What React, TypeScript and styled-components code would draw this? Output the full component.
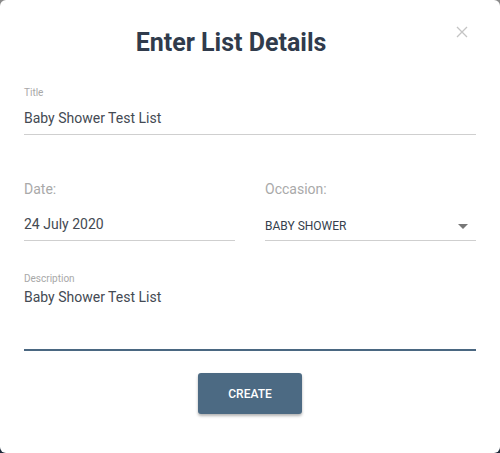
import React from "react";
import styled, { createGlobalStyle } from "styled-components";

const Global = createGlobalStyle`
  html, body { margin: 0; padding: 0; }
  body {
    width: 500px; height: 453px; overflow: hidden;
    background: linear-gradient(#8a8a8a, #1e2a3a);
    font-family: Roboto, "Liberation Sans", sans-serif;
  }
`;

const Modal = styled.div`
  position: relative;
  box-sizing: border-box;
  width: 500px;
  height: 453px;
  background: #fff;
  border-radius: 6px;
  padding: 28px 24px 0 24px;
  display: flex;
  flex-direction: column;
`;

const Heading = styled.h1`
  margin: 0;
  padding-right: 38px;
  text-align: center;
  font-size: 25px;
  font-weight: 700;
  color: #303b4c;
  line-height: 30px;
`;

const Close = styled.button`
  position: absolute;
  top: 26px;
  right: 31px;
  border: none;
  background: none;
  padding: 0;
  width: 14px;
  height: 14px;
  cursor: pointer;
`;

const Field = styled.div<{ $mt: number }>`
  margin-top: ${(p) => p.$mt}px;
  display: flex;
  flex-direction: column;
  min-width: 0;
`;

const SmallLabel = styled.label`
  font-size: 10px;
  color: #a8a8a8;
  line-height: 12px;
`;

const BigLabel = styled.label`
  font-size: 14px;
  color: #a9a9a9;
  line-height: 16px;
`;

const Value = styled.div<{ $pt: number; $pb: number; $line: string; $lw: number }>`
  font-size: 14px;
  color: #444a53;
  padding-top: ${(p) => p.$pt}px;
  padding-bottom: ${(p) => p.$pb}px;
  line-height: 17px;
  border-bottom: ${(p) => p.$lw}px solid ${(p) => p.$line};
`;

const SelectBox = styled.div`
  display: flex;
  align-items: center;
  justify-content: space-between;
  padding-top: 21px;
  padding-bottom: 5px;
  border-bottom: 1px solid #cfcfcf;
  font-size: 12px;
  color: #363f4d;
  line-height: 17px;
  padding-right: 8px;
`;

const Row = styled.div`
  margin-top: 46px;
  display: grid;
  grid-template-columns: 211px 211px;
  column-gap: 30px;
`;

const Footer = styled.div`
  display: flex;
  justify-content: center;
  margin-top: 22px;
`;

const Button = styled.button`
  width: 104px;
  height: 41px;
  border: none;
  border-radius: 3px;
  background: #4c6a83;
  color: #fff;
  font-family: Roboto, "Liberation Sans", sans-serif;
  font-size: 12px;
  font-weight: 500;
  box-shadow: 0 2px 3px rgba(0, 0, 0, 0.3);
  cursor: pointer;
`;

export default function App() {
  return (
    <>
      <Global />
      <Modal>
        <Heading>Enter List Details</Heading>
        <Close aria-label="close">
          <svg width="12" height="12" viewBox="0 0 12 12">
            <path d="M1 1L11 11M11 1L1 11" stroke="#c4c4c4" strokeWidth="1.3" />
          </svg>
        </Close>
        <Field $mt={29}>
          <SmallLabel>Title</SmallLabel>
          <Value $pt={11} $pb={7} $line="#cfcfcf" $lw={1}>Baby Shower Test List</Value>
        </Field>
        <Row>
          <Field $mt={0}>
            <BigLabel>Date:</BigLabel>
            <Value $pt={19} $pb={7} $line="#cfcfcf" $lw={1}>24 July 2020</Value>
          </Field>
          <Field $mt={0}>
            <BigLabel>Occasion:</BigLabel>
            <SelectBox>
              <span>BABY SHOWER</span>
              <svg width="10" height="5" viewBox="0 0 10 5">
                <path d="M0 0H10L5 5Z" fill="#777" />
              </svg>
            </SelectBox>
          </Field>
        </Row>
        <Field $mt={32}>
          <SmallLabel>Description</SmallLabel>
          <Value $pt={4} $pb={43} $line="#4a6781" $lw={2}>Baby Shower Test List</Value>
        </Field>
        <Footer>
          <Button>CREATE</Button>
        </Footer>
      </Modal>
    </>
  );
}
